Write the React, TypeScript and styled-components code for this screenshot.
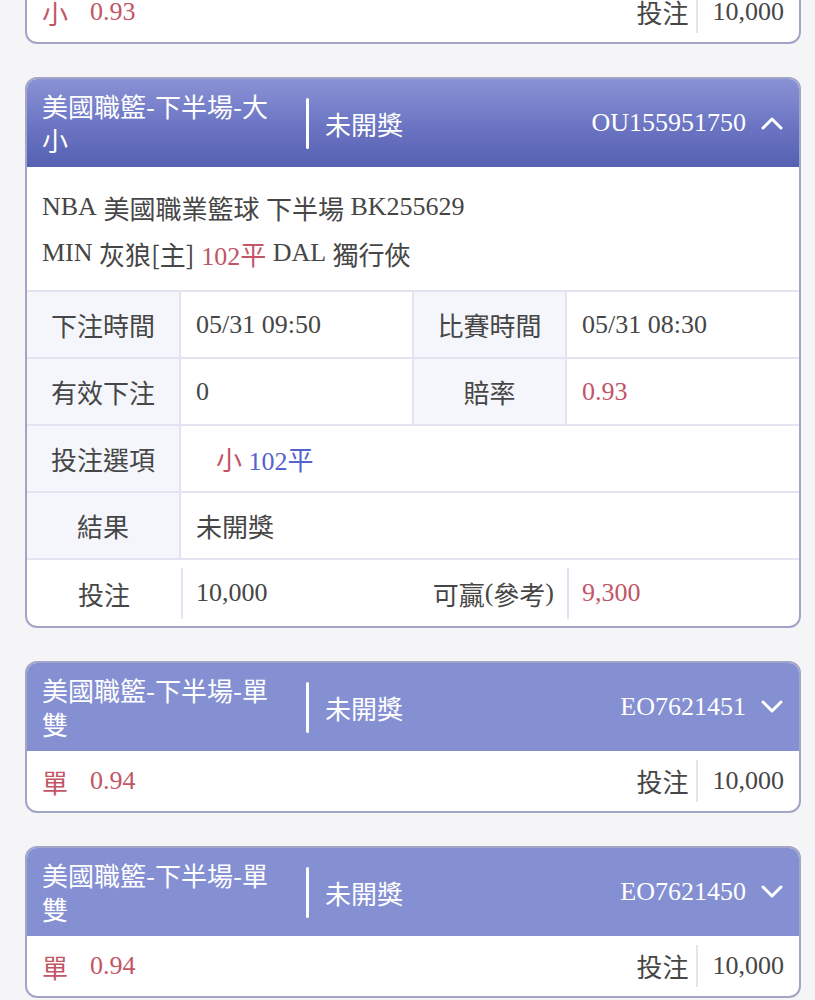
import React from 'react';
import styled, { createGlobalStyle } from 'styled-components';

// == styles =======================================================================================
const GlobalStyle = createGlobalStyle`
  html, body {
    margin: 0;
    padding: 0;
    background: #f5f5f7;
  }
  body {
    font-family: "Liberation Serif", "Noto Sans CJK TC", serif;
    color: #464646;
  }
`;

const Page = styled.div`
  display: flex;
  flex-direction: column;
  gap: 33px;
  padding: 0 14px 20px 25px;
  margin-top: -108px;
`;

const Card = styled.div`
  border: 2px solid #a3a5c6;
  border-radius: 12px;
  overflow: hidden;
  background: #fff;
`;

const Header = styled.div<{ $open?: boolean }>`
  display: flex;
  align-items: center;
  height: 88px;
  padding: 0 16px 0 15px;
  box-sizing: border-box;
  color: #fff;
  background: ${ ( p ) => p.$open
    ? 'linear-gradient(180deg, #8a92d5 0%, #6a74c2 55%, #5660b2 100%)'
    : '#8590d3' };
  font-size: 26px;
`;

const Title = styled.div`
  flex: 0 0 240px;
  line-height: 34px;
  font-family: "Noto Sans CJK TC", sans-serif;
`;

const Divider = styled.div`
  flex: 0 0 3px;
  height: 51px;
  background: #fff;
  border-radius: 2px;
  margin: 0 16px 0 24px;
`;

const Status = styled.div`
  flex: 1;
  font-family: "Noto Sans CJK TC", sans-serif;
`;

const OrderNo = styled.div`
  display: flex;
  align-items: center;
  gap: 15px;
`;

const Summary = styled.div`
  display: flex;
  align-items: center;
  height: 60px;
  padding: 0 15px;
  font-size: 26px;
`;

const Pick = styled.span`
  color: #c25566;
  font-family: "Noto Sans CJK TC", sans-serif;
  margin-right: 22px;
`;

const Odds = styled.span`
  color: #c25566;
  flex: 1;
`;

const StakeLabel = styled.span`
  font-family: "Noto Sans CJK TC", sans-serif;
  padding-right: 7px;
  border-right: 2px solid #e4e4ee;
  line-height: 42px;
`;

const StakeValue = styled.span`
  padding-left: 15px;
`;

const Info = styled.div`
  padding: 17px 15px 14px;
  font-size: 26px;
`;

const InfoLine = styled.div`
  display: flex;
  align-items: center;
  gap: 0.25em;
  height: 46px;
  white-space: pre;
`;

const Red = styled.span`
  color: #c25566;
`;

const Blue = styled.span`
  color: #5463d0;
`;

const Choice = styled.span`
  display: flex;
  align-items: center;
  gap: 0.25em;
`;

const Table = styled.div`
  display: grid;
  grid-template-columns: 154px 233px 153px 1fr;
  font-size: 26px;
`;

const Label = styled.div`
  display: flex;
  align-items: center;
  justify-content: center;
  height: 65px;
  border-top: 2px solid #e4e4f0;
  border-right: 2px solid #e4e4f0;
  background: #f5f6fb;
  font-family: "Noto Sans CJK TC", sans-serif;
`;

const Value = styled.div<{ $span?: boolean; $indent?: number; $last?: boolean }>`
  display: flex;
  align-items: center;
  height: 65px;
  grid-column: ${ ( p ) => p.$span ? 'span 3' : 'auto' };
  padding-left: ${ ( p ) => p.$indent ?? 15 }px;
  border-top: 2px solid #e4e4f0;
  border-right: ${ ( p ) => p.$last ? 'none' : '2px solid #e4e4f0' };
  white-space: pre;
`;

const Cjk = styled.span`
  font-family: "Noto Sans CJK TC", sans-serif;
`;

const FooterCell = styled.div<{ $align?: 'left' | 'right' | 'center'; $sep?: boolean }>`
  position: relative;
  display: flex;
  align-items: center;
  justify-content: ${ ( p ) => p.$align === 'right' ? 'flex-end' : p.$align === 'center' ? 'center' : 'flex-start' };
  height: 66px;
  padding: ${ ( p ) => p.$align === 'right' ? '0 13px 0 0' : p.$align === 'center' ? '0' : '0 0 0 15px' };
  border-top: 2px solid #e4e4f0;
  &::before {
    content: '';
    display: ${ ( p ) => p.$sep ? 'block' : 'none' };
    position: absolute;
    left: 0;
    top: 8px;
    bottom: 7px;
    width: 2px;
    background: #e4e4f0;
  }
`;

// == icons ========================================================================================
const Chevron = ( { up }: { up?: boolean } ): JSX.Element => (
  <svg width="22" height="14" viewBox="0 0 22 14" fill="none">
    <path
      d={ up ? 'M2 12 L11 3 L20 12' : 'M2 2 L11 11 L20 2' }
      stroke="#fff"
      strokeWidth="3"
      strokeLinecap="round"
      strokeLinejoin="round"
    />
  </svg>
);

// == components ===================================================================================
const CardHeader = ( { title, no, open }: {
  title: string;
  no: string;
  open?: boolean;
} ): JSX.Element => (
  <Header $open={ open }>
    <Title>{ title }</Title>
    <Divider />
    <Status>未開獎</Status>
    <OrderNo>
      { no }
      <Chevron up={ open } />
    </OrderNo>
  </Header>
);

const CollapsedCard = ( { title, no, pick, odds }: {
  title: string;
  no: string;
  pick: string;
  odds: string;
} ): JSX.Element => (
  <Card>
    <CardHeader title={ title } no={ no } />
    <Summary>
      <Pick>{ pick }</Pick>
      <Odds>{ odds }</Odds>
      <StakeLabel>投注</StakeLabel>
      <StakeValue>10,000</StakeValue>
    </Summary>
  </Card>
);

const App = (): JSX.Element => {
  return <>
    <GlobalStyle />
    <Page>
      <CollapsedCard title="美國職籃-下半場-大小" no="OU155951751" pick="小" odds="0.93" />

      <Card>
        <CardHeader title="美國職籃-下半場-大小" no="OU155951750" open />
        <Info>
          <InfoLine>
            <span>NBA</span><Cjk>美國職業籃球</Cjk><Cjk>下半場</Cjk><span>BK255629</span>
          </InfoLine>
          <InfoLine>
            <span>MIN</span><Cjk>灰狼[主]</Cjk><Red>102<Cjk>平</Cjk></Red><span>DAL</span><Cjk>獨行俠</Cjk>
          </InfoLine>
        </Info>
        <Table>
          <Label>下注時間</Label>
          <Value>05/31 09:50</Value>
          <Label>比賽時間</Label>
          <Value $last>05/31 08:30</Value>

          <Label>有效下注</Label>
          <Value>0</Value>
          <Label>賠率</Label>
          <Value $last><Red>0.93</Red></Value>

          <Label>投注選項</Label>
          <Value $span $last $indent={ 35 }>
            <Choice>
              <Red><Cjk>小</Cjk></Red>
              <Blue>102<Cjk>平</Cjk></Blue>
            </Choice>
          </Value>

          <Label>結果</Label>
          <Value $span $last><Cjk>未開獎</Cjk></Value>

          <FooterCell $align="center"><Cjk>投注</Cjk></FooterCell>
          <FooterCell $sep>10,000</FooterCell>
          <FooterCell $align="right"><Cjk>可贏</Cjk>(<Cjk>參考</Cjk>)</FooterCell>
          <FooterCell $sep><Red>9,300</Red></FooterCell>
        </Table>
      </Card>

      <CollapsedCard title="美國職籃-下半場-單雙" no="EO7621451" pick="單" odds="0.94" />
      <CollapsedCard title="美國職籃-下半場-單雙" no="EO7621450" pick="單" odds="0.94" />
    </Page>
  </>;
};

export default App;
